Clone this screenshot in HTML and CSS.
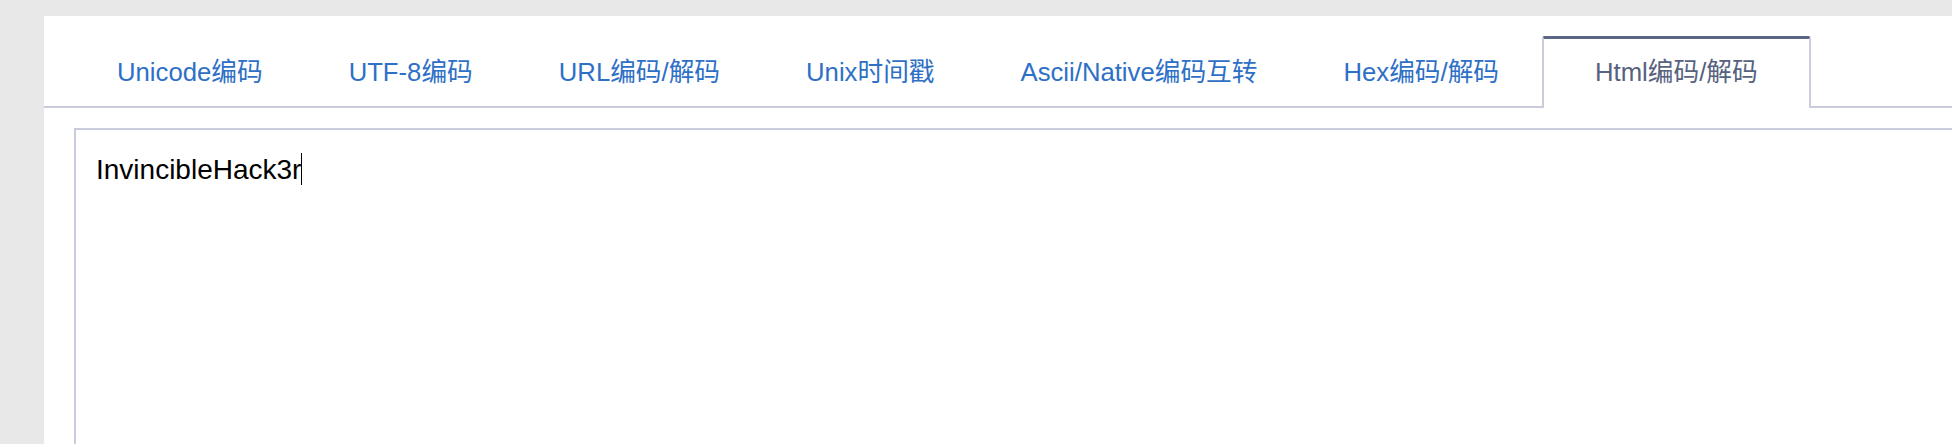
FILE: index.html
```html
<!DOCTYPE html>
<html lang="zh-CN">
<head>
<meta charset="utf-8">
<title>编码工具</title>
<link rel="stylesheet" href="styles.css">
</head>
<body>
<div class="panel">
  <ul class="tabs">
    <li class="tab"><a href="#">Unicode编码</a></li>
    <li class="tab"><a href="#">UTF-8编码</a></li>
    <li class="tab"><a href="#">URL编码/解码</a></li>
    <li class="tab"><a href="#">Unix时间戳</a></li>
    <li class="tab"><a href="#">Ascii/Native编码互转</a></li>
    <li class="tab"><a href="#">Hex编码/解码</a></li>
    <li class="tab active"><a href="#">Html编码/解码</a></li>
  </ul>
  <div class="editor"><span class="text">InvincibleHack3r</span><span class="caret"></span></div>
</div>
</body>
</html>
```
FILE: styles.css
```css
html, body {
  margin: 0;
  padding: 0;
  background: #e8e8e8;
  overflow: hidden;
  height: 444px;
}
.panel {
  margin: 16px 0 0 44px;
  background: #ffffff;
  height: 428px;
  font-family: "Liberation Sans", "Noto Sans CJK SC", sans-serif;
}
.tabs {
  list-style: none;
  margin: 0;
  padding: 20px 0 0 30px;
  display: flex;
  align-items: flex-end;
  border-bottom: 2px solid #c9ccdc;
}
.tab {
  height: 67px;
  border-top: 3px solid transparent;
  padding: 0 43px;
  font-size: 25.7px;
  line-height: 67px;
  white-space: nowrap;
}
.tab a {
  color: #2e70c6;
  text-decoration: none;
}
.tab.active {
  padding: 0 51px 2px;
  margin-bottom: -2px;
  background: #ffffff;
  border-top: 3px solid #5a6684;
  border-left: 2px solid #c9ccdc;
  border-right: 2px solid #c9ccdc;
  border-radius: 3px 3px 0 0;
}
.tab.active a {
  color: #56627e;
}
.editor {
  margin: 20px -60px 0 30px;
  height: 400px;
  border: 2px solid #c9ccdc;
  padding: 24px 18px 24px 20px;
  font-family: "Liberation Sans", Arial, sans-serif;
  font-size: 28px;
  color: #000000;
  display: flex;
  align-items: flex-start;
}
.caret {
  display: inline-block;
  width: 1px;
  height: 32px;
  margin-top: -1px;
  background: #000000;
}
```
